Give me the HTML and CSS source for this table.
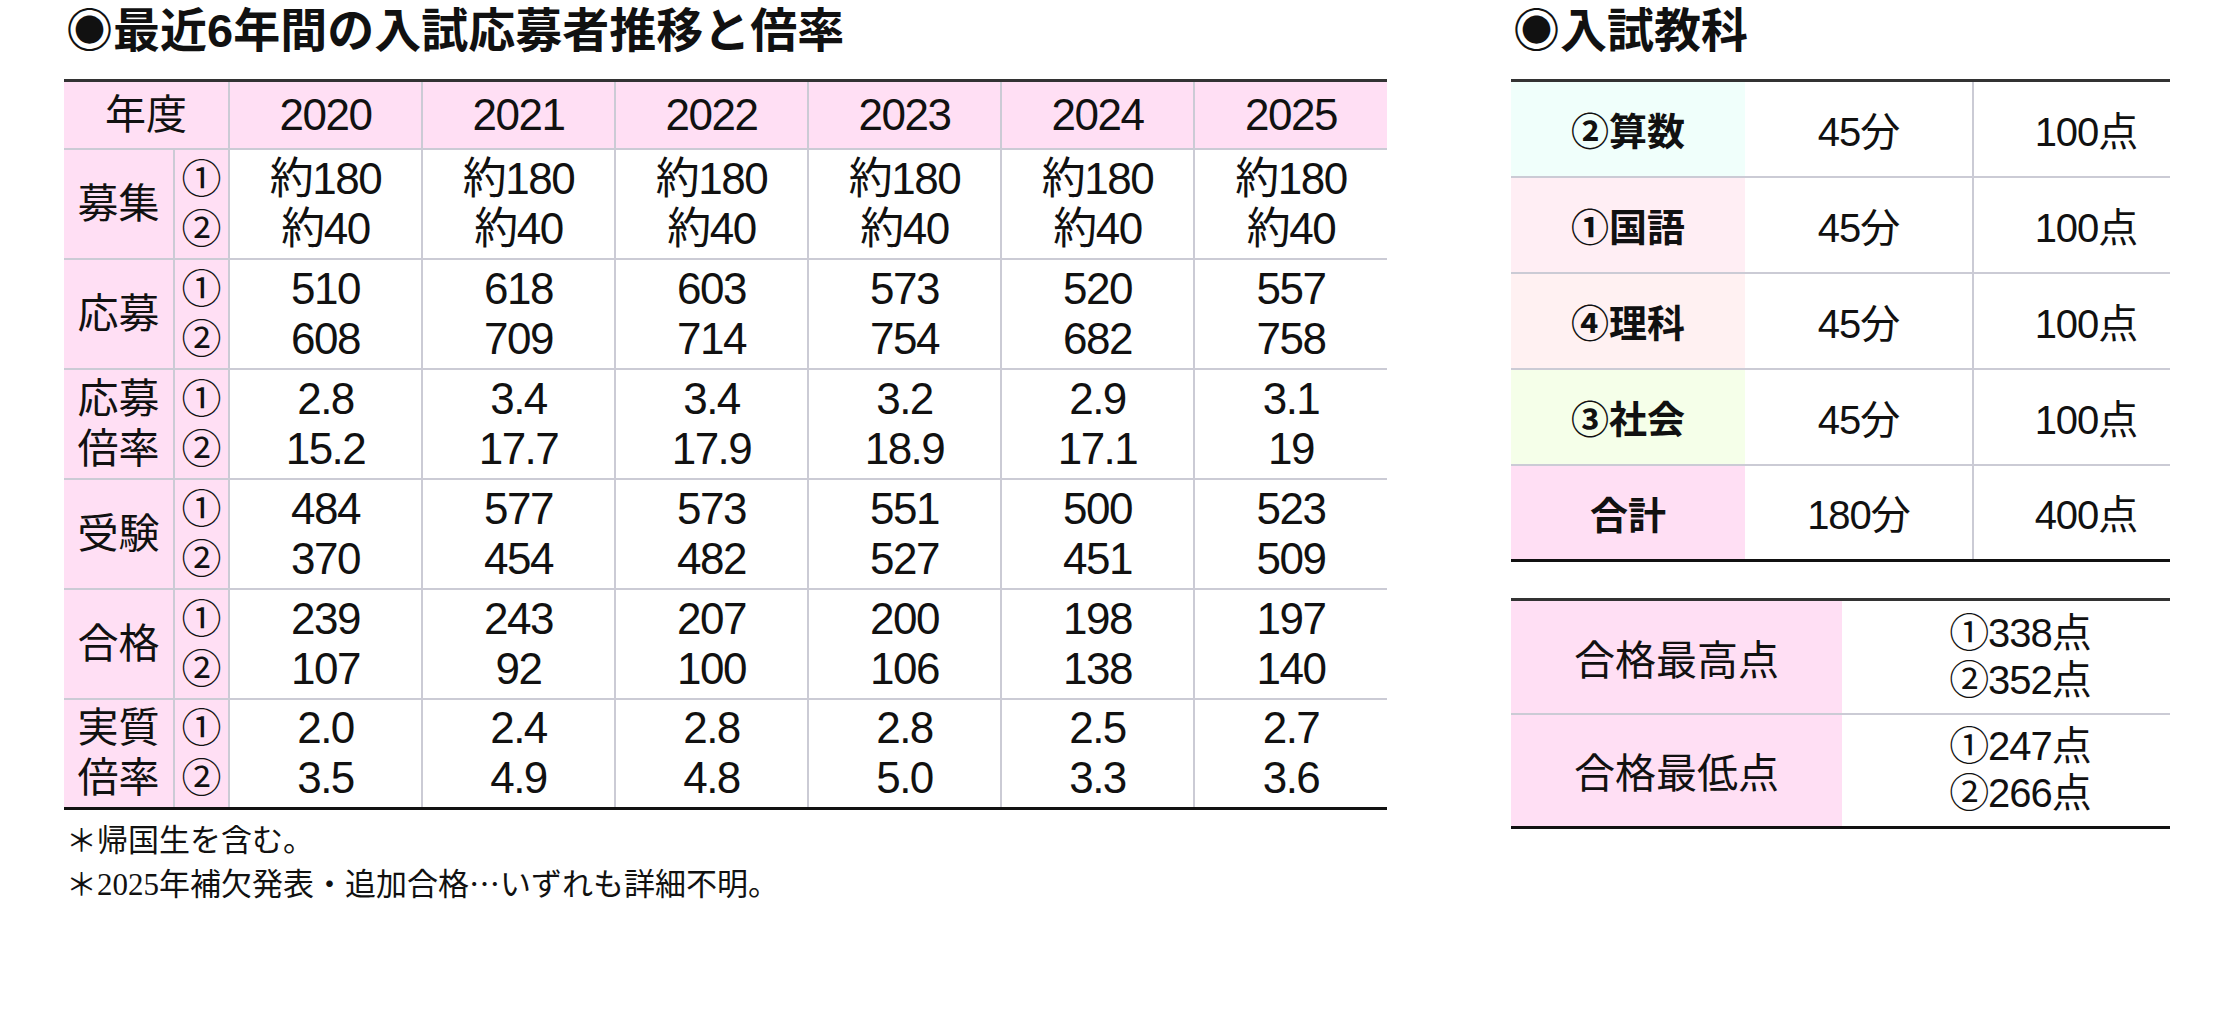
FILE: index.html
```html
<!DOCTYPE html>
<html lang="ja">
<head>
<meta charset="utf-8">
<title>入試データ</title>
<link rel="stylesheet" href="styles.css">
</head>
<body>
<div class="page">
  <section class="left">
    <h1 class="ttl">◉最近6年間の入試応募者推移と倍率</h1>
    <table class="hist">
      <colgroup>
        <col class="c-lab"><col class="c-circ">
        <col class="c-yr"><col class="c-yr"><col class="c-yr"><col class="c-yr"><col class="c-yr"><col class="c-yr">
      </colgroup>
      <thead>
        <tr><th colspan="2" class="lab">年度</th><th>2020</th><th>2021</th><th>2022</th><th>2023</th><th>2024</th><th>2025</th></tr>
      </thead>
      <tbody>
        <tr><th class="lab">募集</th><td class="circ">①<br>②</td><td>約180<br>約40</td><td>約180<br>約40</td><td>約180<br>約40</td><td>約180<br>約40</td><td>約180<br>約40</td><td>約180<br>約40</td></tr>
        <tr><th class="lab">応募</th><td class="circ">①<br>②</td><td>510<br>608</td><td>618<br>709</td><td>603<br>714</td><td>573<br>754</td><td>520<br>682</td><td>557<br>758</td></tr>
        <tr><th class="lab">応募<br>倍率</th><td class="circ">①<br>②</td><td>2.8<br>15.2</td><td>3.4<br>17.7</td><td>3.4<br>17.9</td><td>3.2<br>18.9</td><td>2.9<br>17.1</td><td>3.1<br>19</td></tr>
        <tr><th class="lab">受験</th><td class="circ">①<br>②</td><td>484<br>370</td><td>577<br>454</td><td>573<br>482</td><td>551<br>527</td><td>500<br>451</td><td>523<br>509</td></tr>
        <tr><th class="lab">合格</th><td class="circ">①<br>②</td><td>239<br>107</td><td>243<br>92</td><td>207<br>100</td><td>200<br>106</td><td>198<br>138</td><td>197<br>140</td></tr>
        <tr><th class="lab">実質<br>倍率</th><td class="circ">①<br>②</td><td>2.0<br>3.5</td><td>2.4<br>4.9</td><td>2.8<br>4.8</td><td>2.8<br>5.0</td><td>2.5<br>3.3</td><td>2.7<br>3.6</td></tr>
      </tbody>
    </table>
    <div class="notes">
      <p>＊帰国生を含む。</p>
      <p>＊2025年補欠発表・追加合格<span class="cj">…</span>いずれも詳細不明。</p>
    </div>
  </section>
  <section class="right">
    <h1 class="ttl">◉入試教科</h1>
    <table class="subj">
      <colgroup><col class="s-lab"><col class="s-time"><col class="s-pt"></colgroup>
      <tbody>
        <tr><th class="bg-math">②算数</th><td>45分</td><td class="pt">100点</td></tr>
        <tr><th class="bg-jp">①国語</th><td>45分</td><td class="pt">100点</td></tr>
        <tr><th class="bg-sci">④理科</th><td>45分</td><td class="pt">100点</td></tr>
        <tr><th class="bg-soc">③社会</th><td>45分</td><td class="pt">100点</td></tr>
        <tr><th class="bg-sum">合計</th><td>180分</td><td class="pt">400点</td></tr>
      </tbody>
    </table>
    <table class="score">
      <colgroup><col class="sc-lab"><col class="sc-val"></colgroup>
      <tbody>
        <tr><th>合格最高点</th><td>①338点<br>②352点</td></tr>
        <tr><th>合格最低点</th><td>①247点<br>②266点</td></tr>
      </tbody>
    </table>
  </section>
</div>
</body>
</html>
```

FILE: styles.css
```css
body {
  margin: 0;
  background: #ffffff;
  color: #111111;
}

.page {
  display: flex;
  gap: 124px;
  padding-left: 64px;
}

.left {
  width: 1323px;
}

.right {
  width: 659px;
}

.ttl {
  margin: 0 0 0 2px;
  height: 79px;
  font-family: "Liberation Sans", "Noto Sans CJK JP", sans-serif;
  font-weight: 700;
  font-size: 47px;
  line-height: 62px;
  white-space: nowrap;
}

table {
  border-collapse: collapse;
  table-layout: fixed;
  width: 100%;
  font-family: "Liberation Sans", "Noto Sans CJK JP", sans-serif;
}

th, td {
  padding: 0;
  text-align: center;
  vertical-align: middle;
}

/* history table */
.hist {
  border-top: 3px solid #333333;
  border-bottom: 3px solid #111111;
}

.c-lab { width: 110px; }
.c-circ { width: 55px; }
.c-yr { width: 193px; }

.hist th,
.hist td {
  font-weight: 400;
  font-size: 44px;
  line-height: 50px;
  letter-spacing: -1.5px;
  border: 2px solid #cbcbd5;
}

.hist tr > :first-child { border-left: none; }
.hist tr > :last-child { border-right: none; }

.hist thead tr { height: 68px; }
.hist tbody tr { height: 110px; }

.hist thead th,
.hist .lab,
.hist .circ {
  background: #ffdff4;
}

.hist .lab {
  font-size: 41px;
  letter-spacing: 0;
}

.hist .circ {
  font-size: 40px;
  letter-spacing: 0;
}

.notes {
  margin-top: 10px;
  margin-left: 2px;
  font-family: "Liberation Serif", "Noto Sans CJK JP", serif;
  font-size: 31px;
  line-height: 41px;
}

.notes p {
  margin: 0;
}

.notes .cj {
  font-family: "Noto Sans CJK JP", sans-serif;
}

/* subjects table */
.subj {
  border-top: 3px solid #333333;
  border-bottom: 3px solid #111111;
}

.s-lab { width: 234px; }
.s-time { width: 228px; }
.s-pt { width: 197px; }

.subj tr { height: 96px; }

.subj th,
.subj td {
  border-bottom: 2px solid #cbcbd5;
}

.subj th {
  font-weight: 700;
  font-size: 38px;
}

.subj td {
  font-weight: 400;
  font-size: 40px;
  letter-spacing: -1px;
}

.subj td.pt {
  border-left: 2px solid #cbcbd5;
  padding-left: 28px;
}

.bg-math { background: #f0fffb; }
.bg-jp { background: #ffeef4; }
.bg-sci { background: #fff1f2; }
.bg-soc { background: #f5ffe9; }
.bg-sum { background: #ffdff4; }

/* score table */
.score {
  margin-top: 36px;
  border-top: 3px solid #333333;
  border-bottom: 3px solid #111111;
}

.sc-lab { width: 331px; }
.sc-val { width: 328px; }

.score tr { height: 114px; }

.score th,
.score td {
  border-bottom: 2px solid #cbcbd5;
}

.score th {
  background: #ffdff4;
  font-weight: 400;
  font-size: 41px;
}

.score td {
  font-size: 40px;
  line-height: 47px;
  letter-spacing: -1px;
  padding-left: 28px;
}
```
